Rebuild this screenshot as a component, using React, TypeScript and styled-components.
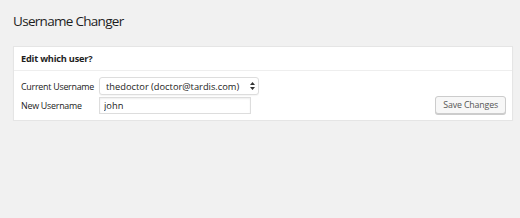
import React, { FC } from 'react';
import styled, { createGlobalStyle } from 'styled-components';

const GlobalStyle = createGlobalStyle`
  html, body {
    margin: 0;
    padding: 0;
    background: #f1f1f1;
  }
  body {
    font-family: "Open Sans", "Liberation Sans", sans-serif;
    color: #222;
  }
`;

const Wrap = styled.div`
  padding: 8px 7px 0 13px;
`;

const Title = styled.h1`
  margin: 0 0 11px;
  font-size: 13.5px;
  font-weight: 400;
  letter-spacing: -0.7px;
  line-height: 27px;
  color: #1e1e1e;
`;

const Panel = styled.div`
  background: #fff;
  border: 1px solid #e5e5e5;
  box-shadow: 0 1px 1px rgba(0, 0, 0, 0.04);
`;

const PanelHeader = styled.h2`
  margin: 0;
  padding: 0 7px;
  height: 23px;
  display: flex;
  align-items: center;
  font-size: 9.2px;
  font-weight: 700;
  letter-spacing: -0.2px;
  color: #1e1e1e;
  border-bottom: 1px solid #eee;
`;

const PanelBody = styled.div`
  display: flex;
  justify-content: space-between;
  align-items: flex-end;
  padding: 6px 6px 6px 7px;
`;

const Fields = styled.div`
  display: grid;
  grid-template-columns: 78px auto;
  row-gap: 2px;
  align-items: center;
`;

const Label = styled.label`
  font-size: 8.9px;
  letter-spacing: -0.25px;
  white-space: nowrap;
  color: #222;
`;

const SelectBox = styled.div`
  position: relative;
  display: flex;
  width: 160px;
`;

const Select = styled.select`
  appearance: none;
  -webkit-appearance: none;
  box-sizing: border-box;
  width: 100%;
  height: 18px;
  margin: 0;
  padding: 0 18px 0 6px;
  font-family: inherit;
  font-size: 9.3px;
  color: #222;
  background: #fff;
  border: 1px solid #ddd;
  border-radius: 3px;
  box-shadow: 0 1px 1px rgba(0, 0, 0, 0.04);
  outline: none;
`;

const Arrows = styled.svg`
  position: absolute;
  right: 4px;
  top: 5px;
  pointer-events: none;
`;

const Input = styled.input`
  box-sizing: border-box;
  width: 152px;
  height: 17px;
  margin: 0;
  padding: 0 4px;
  font-family: inherit;
  font-size: 9.3px;
  color: #222;
  background: #fff;
  border: 1px solid #ddd;
  box-shadow: inset 0 1px 2px rgba(0, 0, 0, 0.07);
  outline: none;
`;

const Button = styled.button`
  box-sizing: border-box;
  height: 18px;
  margin: 0;
  padding: 0 7px;
  font-family: inherit;
  font-size: 8.8px;
  letter-spacing: -0.15px;
  color: #555;
  background: #f7f7f7;
  border: 1px solid #ccc;
  border-radius: 3px;
  box-shadow: 0 1px 0 #ccc;
  white-space: nowrap;
`;

const App: FC = () => (
  <>
    <GlobalStyle />
    <Wrap>
      <Title>Username Changer</Title>

      <Panel>
        <PanelHeader>Edit which user?</PanelHeader>

        <PanelBody>
          <Fields>
            <Label htmlFor="current">Current Username</Label>
            <SelectBox>
              <Select id="current" defaultValue="thedoctor">
                <option value="thedoctor">thedoctor (doctor@tardis.com)</option>
              </Select>
              <Arrows width="5" height="8" viewBox="0 0 5 8">
                <path d="M2.5 0 L5 3 H0 Z M2.5 8 L5 5 H0 Z" fill="#333" />
              </Arrows>
            </SelectBox>

            <Label htmlFor="new">New Username</Label>
            <Input id="new" defaultValue="john" />
          </Fields>

          <Button type="button">Save Changes</Button>
        </PanelBody>
      </Panel>
    </Wrap>
  </>
);

export default App;
